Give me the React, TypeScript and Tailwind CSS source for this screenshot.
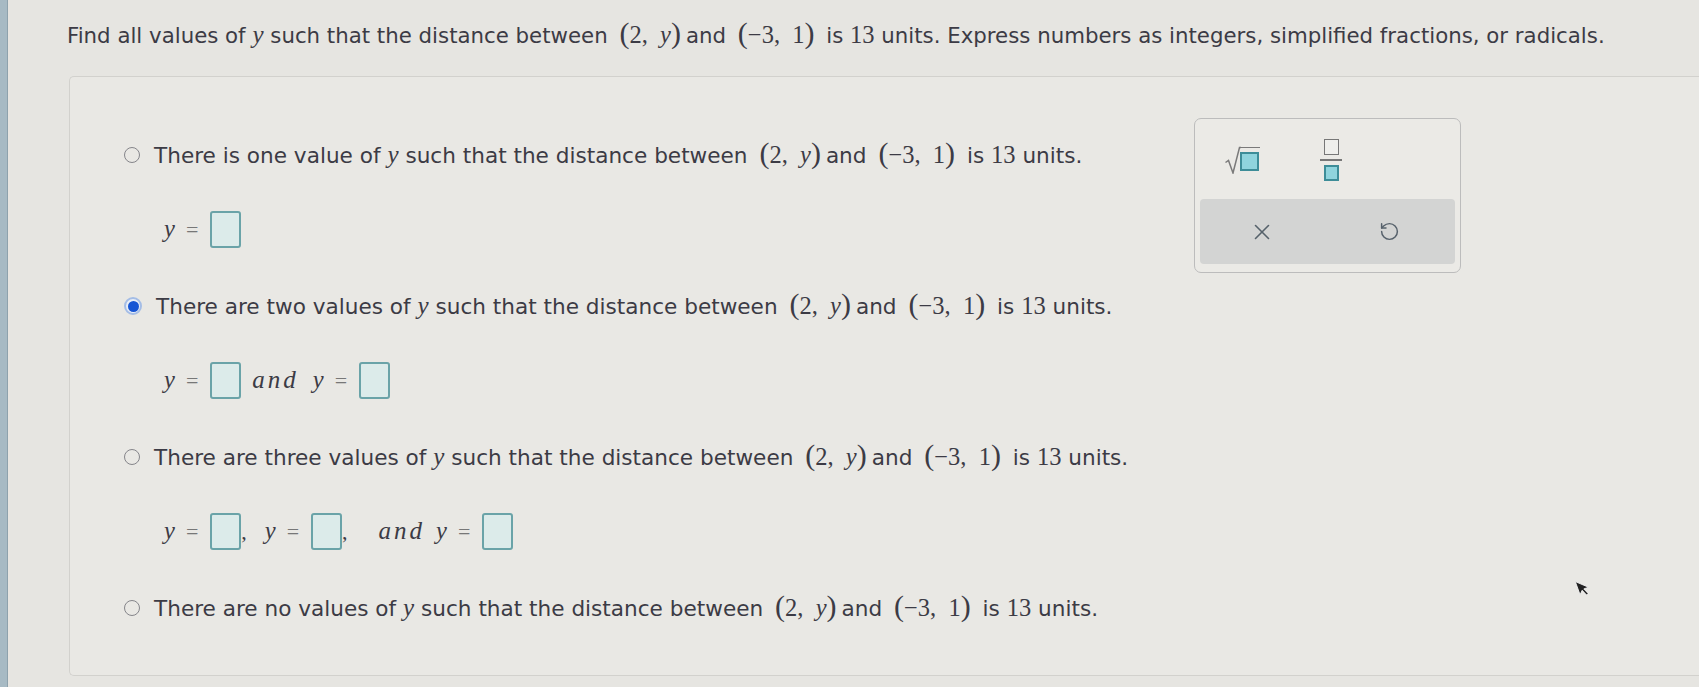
import React from "react";
import { RotateCcw, X } from "lucide-react";

const serif = "font-['Liberation_Serif',serif]";

// math point like (2, y)
const Pt = ({ a, b }: { a: React.ReactNode; b: React.ReactNode }) => (
  <span className={`${serif} text-[24.5px] mx-[5px]`}>
    <span className="text-[30px] leading-none">(</span>
    {a},&nbsp;&nbsp;{b}
    <span className="text-[30px] leading-none">)</span>
  </span>
);

const Y = () => <i className={`${serif} text-[25px]`}>y</i>;

const Sentence = ({ lead }: { lead: string }) => (
  <>
    {lead} <Y /> such that the distance between <Pt a="2" b={<i>y</i>} />
    and <Pt a="−3" b="1" /> is <span className={`${serif} text-[24.5px]`}>13</span> units.
  </>
);

const Radio = ({ checked }: { checked?: boolean }) =>
  checked ? (
    <div className="flex h-[18px] w-[18px] flex-none items-center justify-center rounded-full border-[2px] border-[#a4bde6] bg-[#e9eef7]">
      <div className="h-[11px] w-[11px] rounded-full bg-[#1655d4]" />
    </div>
  ) : (
    <div className="h-[16px] w-[16px] flex-none rounded-full border-[1.5px] border-[#85858a]" />
  );

const Box = () => (
  <div className="h-[37px] w-[31px] flex-none rounded-[3px] border-[2px] border-[#6aa3a8] bg-[#dcebea]" />
);

const Eq = () => (
  <span className="flex items-center">
    <i className={`${serif} text-[24.5px]`}>y</i>
    <span className={`${serif} ml-[11px] mr-[12px] text-[22px] text-[#777]`}>=</span>
    <Box />
  </span>
);

const And = ({ cls }: { cls: string }) => (
  <i className={`${serif} text-[25px] tracking-[3px] ${cls}`}>and</i>
);

const Option = ({ lead, checked, children }: { lead: string; checked?: boolean; children?: React.ReactNode }) => (
  <div>
    <div className="flex h-[30px] items-center">
      <Radio checked={checked} />
      <p className="ml-[14px] whitespace-nowrap">
        <Sentence lead={lead} />
      </p>
    </div>
    {children && <div className="mt-[39px] flex h-[40px] items-center pl-[40px]">{children}</div>}
  </div>
);

const App = () => {
  return (
    <div className="flex h-[687px] overflow-hidden bg-[#e6e5e1] font-['DejaVu_Sans',sans-serif] text-[#3c3b45]">
      <div className="w-[8px] flex-none border-r border-[#8ea2ad] bg-[#a7bac4]" />
      <div className="relative flex-1 pl-[59px]">
        <p className="pt-[18px] text-[21.3px] leading-[30px] whitespace-nowrap">
          Find all values of <Y /> such that the distance between <Pt a="2" b={<i>y</i>} />
          and <Pt a="−3" b="1" /> is <span className={`${serif} text-[24.5px]`}>13</span> units. Express numbers
          as integers, simplified fractions, or radicals.
        </p>

        <div className="ml-[2px] mt-[25px] flex h-[600px] rounded-l-[5px] border border-r-0 border-[#d2d1cd] bg-[#e9e8e4] text-[21.6px]">
          {/* answer choices */}
          <div className="min-w-0 flex-1 pl-[54px] pt-[63px]">
            <Option lead="There is one value of">
              <Eq />
            </Option>
            <div className="mt-[42px]">
              <Option lead="There are two values of" checked>
                <Eq />
                <And cls="ml-[11px] mr-[14px]" />
                <Eq />
              </Option>
            </div>
            <div className="mt-[42px]">
              <Option lead="There are three values of">
                <Eq />
                <span className={`${serif} mr-[18px] text-[22px]`}>,</span>
                <Eq />
                <span className={`${serif} mr-[31px] text-[22px]`}>,</span>
                <And cls="mr-[11px]" />
                <Eq />
              </Option>
            </div>
            <div className="mt-[42px]">
              <Option lead="There are no values of" />
            </div>
          </div>

          {/* math keypad */}
          <div className="mr-[238px] mt-[41px] h-[155px] w-[267px] flex-none rounded-[7px] border-[1.5px] border-[#bcbcbc] bg-[#ebeae6] px-[5px] pb-[7px]">
            <div className="flex h-[80px] items-center pl-[24px] pt-[2px]">
              <div className="flex items-end">
                <svg width="17" height="28" viewBox="0 0 17 28" className="text-[#7a7a7a]">
                  <path d="M1.5 16.5 L4.5 14.5 L9 27 L15.5 1.5 L17 1.5" fill="none" stroke="currentColor" strokeWidth="1.5" />
                </svg>
                <div className="-ml-[1px] mb-[2px] h-[25px] w-[20px] border-t-[1.5px] border-[#7a7a7a] pt-[4px]">
                  <div className="h-[19px] w-[19px] border-[2px] border-[#3d8d98] bg-[#8fd4dd]" />
                </div>
              </div>
              <div className="ml-[60px] flex flex-col items-center">
                <div className="h-[16px] w-[15px] border-[1.5px] border-[#777] bg-[#efefec]" />
                <div className="my-[4px] h-[1.5px] w-[22px] bg-[#777]" />
                <div className="h-[16px] w-[15px] border-[2px] border-[#3d8d98] bg-[#8fd4dd]" />
              </div>
            </div>
            <div className="flex h-[65px] items-center rounded-[4px] bg-[#d3d4d3]">
              <div className="flex w-[124px] justify-center">
                <X size={26} strokeWidth={1.5} className="text-[#56616b]" />
              </div>
              <div className="flex flex-1 justify-center">
                <RotateCcw size={21} strokeWidth={1.7} className="text-[#56616b]" />
              </div>
            </div>
          </div>
        </div>

        {/* mouse pointer */}
        <svg width="14" height="20" viewBox="0 0 14 20" className="absolute left-[1569px] top-[578px] -rotate-[20deg]">
          <path d="M1 1 L1 15 L4.5 11.5 L7 17.5 L9 16.5 L6.5 10.8 L11.5 10.8 Z" fill="#222" stroke="#f4f4f4" strokeWidth="0.8" />
        </svg>
      </div>
    </div>
  );
};

export default App;
